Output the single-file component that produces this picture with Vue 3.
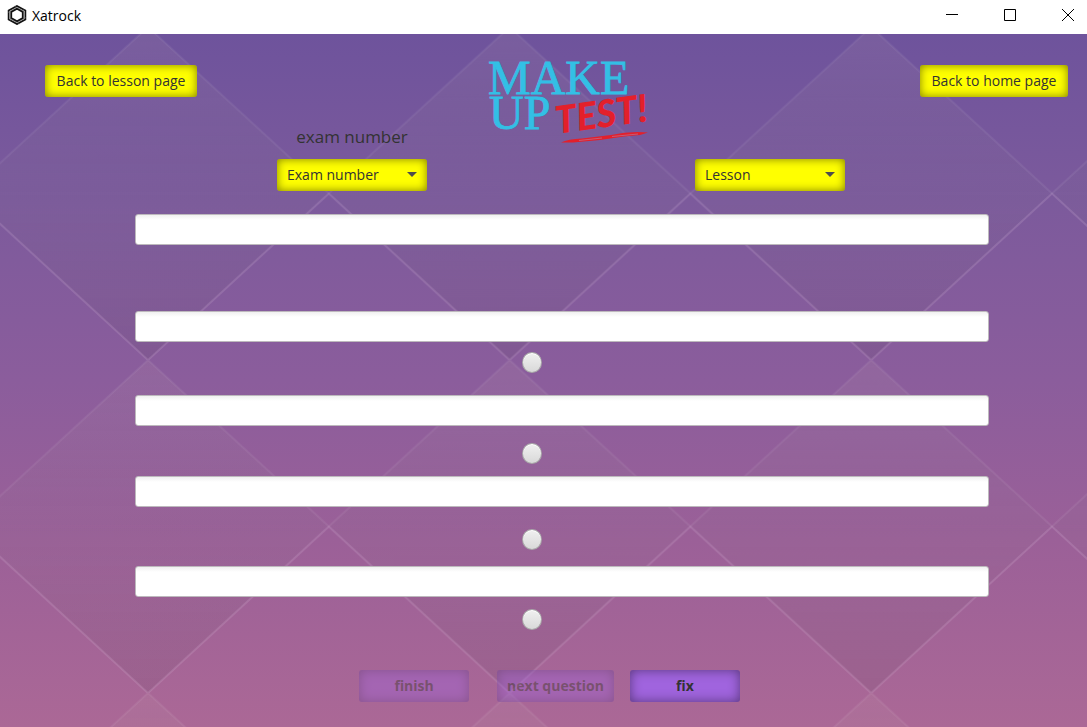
<script setup>
import { ref } from 'vue'

const exam = ref('')
const lesson = ref('')
const question = ref('')
const picked = ref(null)
const answers = ref([
  { id: 1, text: '' },
  { id: 2, text: '' },
  { id: 3, text: '' },
  { id: 4, text: '' }
])
</script>

<template>
  <div class="window">
    <header class="titlebar">
      <svg class="app-icon" viewBox="0 0 20 20" aria-hidden="true">
        <g fill="none" stroke="#111">
          <path d="M10 .9 18.400 5.500V14.500L10 19.100 1.600 14.500V5.500Z" stroke-width="1.700" />
          <path d="M10 3.600 15.800 6.800V13.200L10 16.400 4.200 13.200V6.800Z" stroke-width="1.900" />
          <path d="M7.500 1.200 16 6M16.800 4.500V13.500M19 12.500 10.500 17.300M12.500 18.800 4 14M3.200 15.500V6.500M1 7.500 9.500 2.700" stroke="#777" stroke-width=".5" />
        </g>
      </svg>
      <span class="title">Xatrock</span>
      <div class="controls">
        <button type="button" aria-label="Minimize"><svg viewBox="0 0 12 12"><path d="M0 5.500H12" /></svg></button>
        <button type="button" aria-label="Maximize"><svg viewBox="0 0 12 12"><path d="M.5.5H11.500V11.500H.5Z" /></svg></button>
        <button type="button" aria-label="Close"><svg viewBox="0 0 12 12"><path d="M0 0 12 12M12 0 0 12" /></svg></button>
      </div>
    </header>

    <main class="page">
      <svg class="backdrop" aria-hidden="true">
        <defs>
          <linearGradient id="shade" x1="0" y1="0" x2="0" y2="1">
            <stop offset="0" stop-color="#c8a8b0" stop-opacity=".13" />
            <stop offset=".5" stop-color="#808088" stop-opacity=".06" />
            <stop offset="1" stop-color="#4a3a50" stop-opacity=".13" />
          </linearGradient>
          <pattern id="diamonds" width="361.600" height="333" x="148" y="-7" patternUnits="userSpaceOnUse">
            <path d="M0 0 180.800 166.500 0 333-180.800 166.500Z" fill="url(#shade)" />
            <path d="M361.600 0 542.400 166.500 361.600 333 180.800 166.500Z" fill="url(#shade)" />
            <path d="M0 0 180.800 166.500 361.600 0" fill="none" stroke="#fff" stroke-opacity=".06" stroke-width="2" />
            <path d="M0 333 180.800 166.500 361.600 333" fill="none" stroke="#e8c8e8" stroke-opacity=".17" stroke-width="2" />
          </pattern>
        </defs>
        <rect width="100%" height="100%" fill="url(#diamonds)" />
      </svg>

      <section class="top">
        <div class="side left">
          <button type="button" class="btn yellow lesson-link">Back to lesson page</button>
          <div class="picker">
            <label for="exam">exam number</label>
            <div class="select">
              <select id="exam" v-model="exam"><option value="">Exam number</option></select>
              <svg viewBox="0 0 10 6" aria-hidden="true"><path d="M0 0H10L5 5Z" /></svg>
            </div>
          </div>
        </div>

        <svg class="logo" viewBox="0 0 174 88" role="img" aria-label="Make up test!">
          <g class="blue">
            <text x="14" y="36">MAKE</text>
            <text x="15" y="71">UP</text>
          </g>
          <text class="red" x="83" y="76" transform="rotate(-8 83 76)">TEST!</text>
          <path d="M87 84.500Q94 81 108 80.500L137 77Q155 73 174 74.500L166 77 150 78.500 126 82 99 84.500Z" fill="#e3202b" />
          <path d="M105 82.500 128 80M138 78.500 164 76" stroke="#b97294" stroke-width=".7" />
        </svg>

        <div class="side right">
          <button type="button" class="btn yellow home-link">Back to home page</button>
          <div class="picker">
            <div class="select">
              <select v-model="lesson" aria-label="Lesson"><option value="">Lesson</option></select>
              <svg viewBox="0 0 10 6" aria-hidden="true"><path d="M0 0H10L5 5Z" /></svg>
            </div>
          </div>
        </div>
      </section>

      <form class="quiz" @submit.prevent>
        <input v-model="question" class="field question" type="text" aria-label="Question" />
        <div v-for="a in answers" :key="a.id" class="answer">
          <input v-model="a.text" class="field" type="text" :aria-label="`Answer ${a.id}`" />
          <input v-model="picked" class="radio" type="radio" name="correct" :value="a.id" :aria-label="`Choose answer ${a.id}`" />
        </div>
      </form>

      <footer class="actions">
        <button type="button" class="btn purple finish" disabled>finish</button>
        <button type="button" class="btn purple" disabled>next question</button>
        <button type="button" class="btn purple">fix</button>
      </footer>
    </main>
  </div>
</template>

<style>
body {
  margin: 0;
}
</style>

<style scoped>
.window {
  display: flex;
  flex-direction: column;
  min-height: 100vh;
  font-family: "Open Sans", "Noto Sans", sans-serif;
  font-size: 14px;
  color: #333;
}
.window * {
  box-sizing: border-box;
}
button,
input,
select {
  margin: 0;
  font: inherit;
  color: inherit;
}
.titlebar {
  display: flex;
  align-items: center;
  height: 34px;
  padding: 0 13px 4px 7px;
  background: #fff;
  color: #000;
}
.app-icon {
  width: 20px;
  height: 20px;
  margin-right: 5px;
}
.controls {
  display: flex;
  gap: 34px;
  margin-left: auto;
}
.controls button {
  display: flex;
  justify-content: center;
  width: 24px;
  padding: 6px 0;
  border: 0;
  background: none;
}
.controls button:last-child {
  margin-right: -6px;
}
.controls svg {
  width: 12px;
  height: 12px;
  fill: none;
  stroke: #000;
}
.page {
  position: relative;
  flex: 1;
  padding-bottom: 25px;
  background: linear-gradient(#6e539c, #7c5a9c 24%, #8b5d9c 50%, #9b6098 73%, #ab6896);
}
.backdrop {
  position: absolute;
  inset: 0;
  width: 100%;
  height: 100%;
}
.top,
.quiz,
.actions {
  position: relative;
}
.top {
  display: grid;
  grid-template-columns: 382fr 268fr 373fr;
  padding: 24px 19px 0 45px;
}
.side {
  display: flex;
  flex-direction: column;
  justify-content: space-between;
  height: 133px;
  padding-top: 7px;
}
.left .btn,
.right .picker {
  align-self: flex-start;
}
.left .picker,
.right .btn {
  align-self: flex-end;
}
.picker {
  width: 150px;
}
.picker label {
  display: block;
  margin-bottom: 10px;
  font-size: 17px;
  line-height: 24px;
  text-align: center;
}
.logo {
  justify-self: center;
  width: 174px;
  height: 88px;
}
.blue {
  fill: #33bfe5;
  stroke: #33bfe5;
  stroke-width: .8px;
  font: 48px "Liberation Serif", serif;
}
.red {
  fill: #e3202b;
  font: italic 900 38px Lato, sans-serif;
}
.btn {
  height: 32px;
  padding: 0 10px 2px;
  border: 0;
  border-radius: 3px;
  white-space: nowrap;
}
.lesson-link {
  min-width: 152px;
}
.home-link {
  min-width: 148px;
}
.yellow,
.select select {
  background: #ff0;
  box-shadow: inset 0 0 10px rgba(0, 0, 0, .5);
}
.select {
  position: relative;
}
.select select {
  display: block;
  width: 100%;
  height: 32px;
  padding: 0 30px 2px 10px;
  border: 0;
  border-radius: 3px;
  appearance: none;
}
.select svg {
  position: absolute;
  top: 13px;
  right: 10px;
  width: 10px;
  height: 6px;
  fill: #4d4d4d;
  pointer-events: none;
}
.quiz {
  margin: 23px 98px 0 135px;
}
.field {
  display: block;
  width: 100%;
  height: 31px;
  padding: 0 8px;
  border: 1px solid #bdb9bd;
  border-radius: 3px;
  background: linear-gradient(#f0f0f0, #fff 5px);
}
.question {
  margin-bottom: 66px;
}
.radio {
  display: block;
  width: 20px;
  height: 21px;
  margin: 10px auto 22px;
  border: 1px solid #aaa;
  border-radius: 50%;
  background: linear-gradient(#f0f0f0, #d9d9d9);
  box-shadow: inset 0 1px #fff;
  appearance: none;
  transform: translateX(-30px);
}
.radio:checked {
  background: radial-gradient(#333 4px, #e4e4e4 5px);
}
.answer:nth-of-type(2) .radio {
  margin: 17px auto 12px;
}
.answer:nth-of-type(3) .radio {
  margin: 22px auto 16px;
}
.answer:nth-of-type(4) .radio {
  margin: 12px auto 0;
}
.actions {
  display: flex;
  justify-content: center;
  gap: 16px;
  margin-top: 40px;
  padding-left: 12px;
}
.purple {
  min-width: 110px;
  background: #a064de;
  box-shadow: inset 0 0 12px rgba(0, 0, 0, .45);
  font-weight: 700;
}
.purple:disabled {
  opacity: .4;
}
.finish {
  margin-right: 12px;
}
</style>
